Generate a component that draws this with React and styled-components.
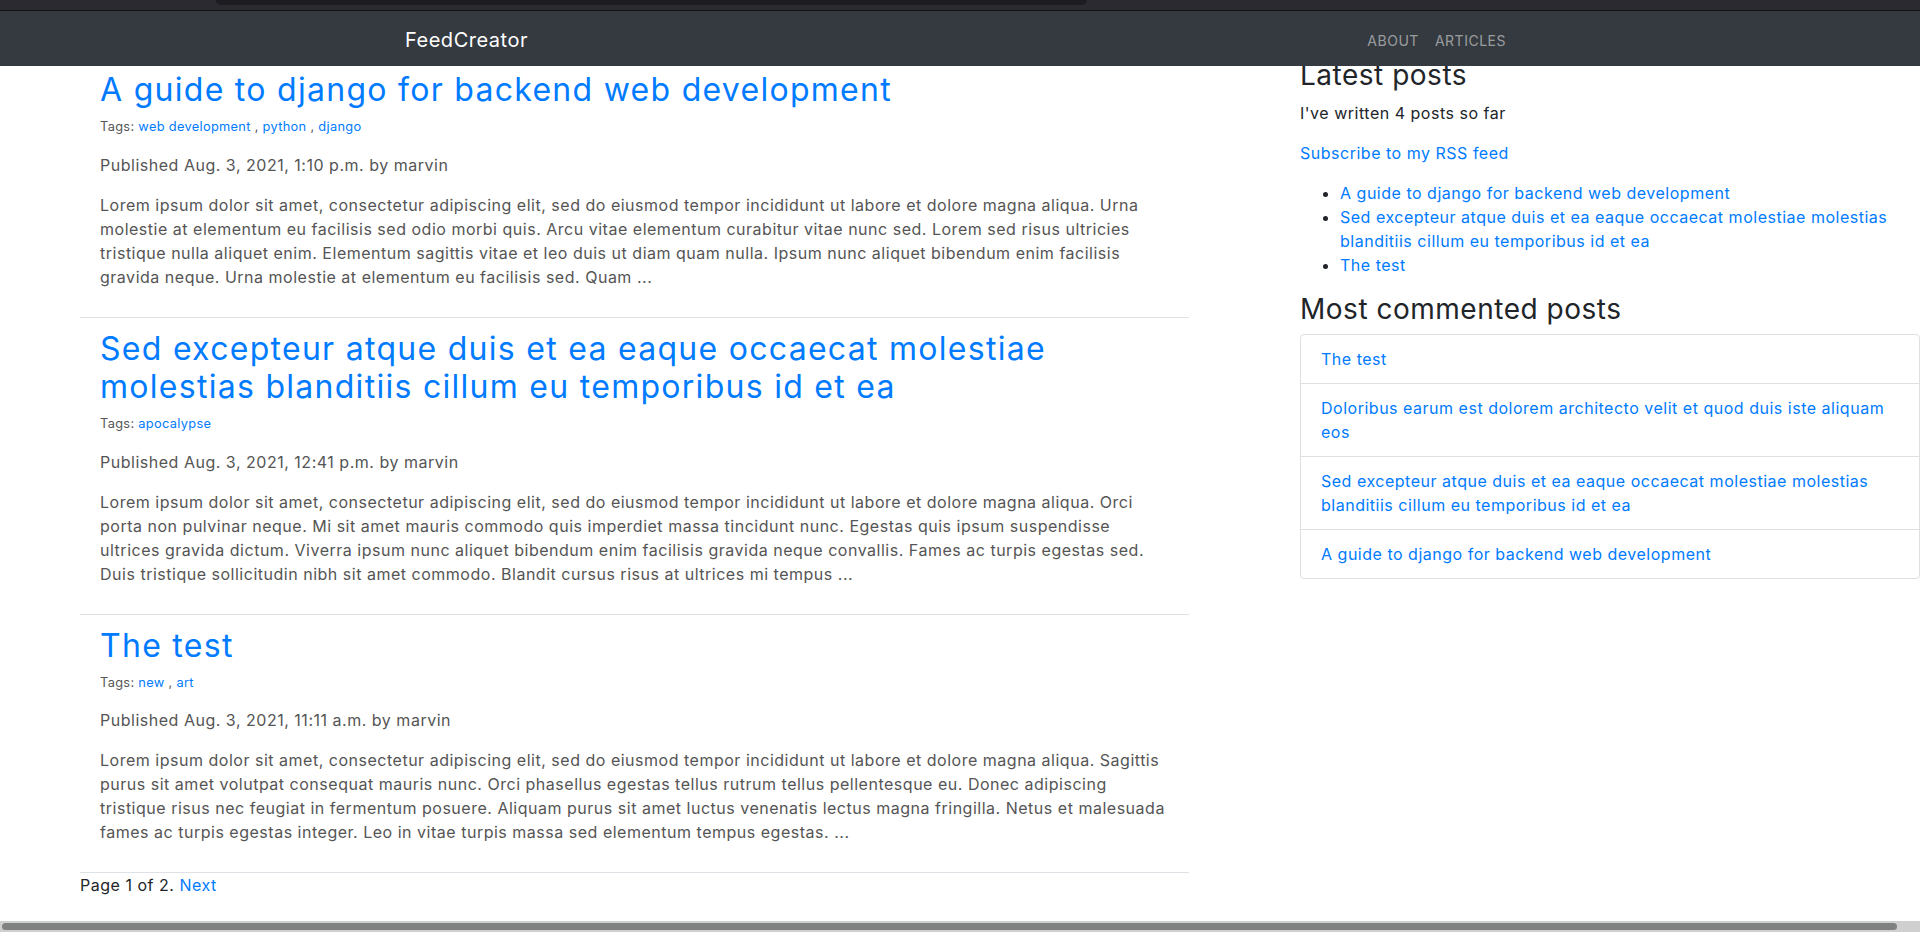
import styled, { createGlobalStyle } from "styled-components";

const GlobalStyle = createGlobalStyle`
  html, body {
    margin: 0;
    padding: 0;
    overflow: hidden;
    background: #fff;
  }
  body {
    font-family: Inter, "Open Sans", sans-serif;
    font-size: 16px;
    line-height: 1.5;
    letter-spacing: 0.032em;
    color: #212529;
  }
  * {
    box-sizing: border-box;
  }
`;

const posts = [
  {
    title: "A guide to django for backend web development",
    tags: ["web development", "python", "django"],
    published: "Aug. 3, 2021, 1:10 p.m.",
    body:
      "Lorem ipsum dolor sit amet, consectetur adipiscing elit, sed do eiusmod tempor incididunt ut labore et dolore magna aliqua. Urna molestie at elementum eu facilisis sed odio morbi quis. Arcu vitae elementum curabitur vitae nunc sed. Lorem sed risus ultricies tristique nulla aliquet enim. Elementum sagittis vitae et leo duis ut diam quam nulla. Ipsum nunc aliquet bibendum enim facilisis gravida neque. Urna molestie at elementum eu facilisis sed. Quam ...",
  },
  {
    title:
      "Sed excepteur atque duis et ea eaque occaecat molestiae molestias blanditiis cillum eu temporibus id et ea",
    tags: ["apocalypse"],
    published: "Aug. 3, 2021, 12:41 p.m.",
    body:
      "Lorem ipsum dolor sit amet, consectetur adipiscing elit, sed do eiusmod tempor incididunt ut labore et dolore magna aliqua. Orci porta non pulvinar neque. Mi sit amet mauris commodo quis imperdiet massa tincidunt nunc. Egestas quis ipsum suspendisse ultrices gravida dictum. Viverra ipsum nunc aliquet bibendum enim facilisis gravida neque convallis. Fames ac turpis egestas sed. Duis tristique sollicitudin nibh sit amet commodo. Blandit cursus risus at ultrices mi tempus ...",
  },
  {
    title: "The test",
    tags: ["new", "art"],
    published: "Aug. 3, 2021, 11:11 a.m.",
    body:
      "Lorem ipsum dolor sit amet, consectetur adipiscing elit, sed do eiusmod tempor incididunt ut labore et dolore magna aliqua. Sagittis purus sit amet volutpat consequat mauris nunc. Orci phasellus egestas tellus rutrum tellus pellentesque eu. Donec adipiscing tristique risus nec feugiat in fermentum posuere. Aliquam purus sit amet luctus venenatis lectus magna fringilla. Netus et malesuada fames ac turpis egestas integer. Leo in vitae turpis massa sed elementum tempus egestas. ...",
  },
];

const latest = [
  "A guide to django for backend web development",
  "Sed excepteur atque duis et ea eaque occaecat molestiae molestias blanditiis cillum eu temporibus id et ea",
  "The test",
];

const mostCommented = [
  "The test",
  "Doloribus earum est dolorem architecto velit et quod duis iste aliquam eos",
  "Sed excepteur atque duis et ea eaque occaecat molestiae molestias blanditiis cillum eu temporibus id et ea",
  "A guide to django for backend web development",
];

// fixed header: browser strip + dark navbar
const Header = styled.header`
  position: fixed;
  top: 0;
  left: 0;
  right: 0;
  z-index: 10;
`;

const TopStrip = styled.div`
  height: 11px;
  background: #2b2a31;
  border-bottom: 1px solid #121215;
`;

const TabBar = styled.div`
  margin-left: 216px;
  width: 871px;
  height: 5px;
  background: #1d1c21;
  border-radius: 0 0 5px 5px;
`;

const Navbar = styled.nav`
  height: 55px;
  background: #343a40;
  display: flex;
  align-items: center;
  justify-content: space-between;
  padding: 3px 406px 0 405px;
`;

const Brand = styled.a`
  color: #fff;
  font-size: 20px;
  text-decoration: none;
`;

const NavLinks = styled.div`
  display: flex;
`;

const NavLink = styled.a`
  color: rgba(255, 255, 255, 0.5);
  text-transform: uppercase;
  font-size: 14px;
  padding: 0 8px;
  text-decoration: none;
`;

const Page = styled.div`
  display: grid;
  grid-template-columns: 1109px 620px;
  column-gap: 111px;
  padding: 59px 0 0 80px;
  align-items: start;
`;

const Main = styled.main``;

const Article = styled.article`
  padding: 12px 20px 12px;
  border-bottom: 1px solid #dee2e6;
`;

const PostTitle = styled.h2`
  margin: 0 0 8px;
  font-size: 32px;
  font-weight: 400;
  line-height: 1.2;
  letter-spacing: 0.04em;

  a {
    color: #007bff;
    text-decoration: none;
  }
`;

const Tags = styled.div`
  font-size: 12.8px;
  letter-spacing: 0.025em;
  color: #555;
  margin-bottom: 16px;

  a {
    color: #007bff;
    text-decoration: none;
  }
`;

const Meta = styled.p`
  margin: 0 0 16px;
  color: #555;
`;

const Body = styled.p`
  margin: 0 0 16px;
  color: #555;
`;

const Pager = styled.div`
  color: #212529;

  a {
    color: #007bff;
    text-decoration: none;
  }
`;

const Sidebar = styled.aside``;

const SideHeading = styled.h3`
  margin: 0 0 8px;
  font-size: 28px;
  font-weight: 400;
  line-height: 1.2;
  color: #212529;
`;

const SideText = styled.p`
  margin: 0 0 16px;
`;

const Link = styled.a`
  color: #007bff;
  text-decoration: none;
`;

const BulletList = styled.ul`
  margin: 0 0 16px;
  padding-left: 40px;
`;

const ListGroup = styled.ul`
  margin: 0;
  padding: 0;
  list-style: none;
  border: 1px solid rgba(0, 0, 0, 0.125);
  border-radius: 4px;
`;

const ListItem = styled.li`
  padding: 12px 20px;
  & + & {
    border-top: 1px solid rgba(0, 0, 0, 0.125);
  }
`;

const ScrollTrack = styled.div`
  position: fixed;
  left: 0;
  right: 0;
  bottom: 0;
  height: 11px;
  background: #cfcfcf;
  padding: 2px 0 2px 2px;
`;

const ScrollThumb = styled.div`
  width: 1895px;
  height: 7px;
  background: #7f8281;
  border-radius: 4px;
`;

function Post({ post }) {
  return (
    <Article>
      <PostTitle>
        <a href="#">{post.title}</a>
      </PostTitle>
      <Tags>
        Tags:{" "}
        {post.tags.map((t, i) => (
          <span key={t}>
            {i > 0 && " , "}
            <a href="#">{t}</a>
          </span>
        ))}
      </Tags>
      <Meta>Published {post.published} by marvin</Meta>
      <Body>{post.body}</Body>
    </Article>
  );
}

export default function App() {
  return (
    <>
      <GlobalStyle />
      <Header>
        <TopStrip>
          <TabBar />
        </TopStrip>
        <Navbar>
          <Brand href="#">FeedCreator</Brand>
          <NavLinks>
            <NavLink href="#">About</NavLink>
            <NavLink href="#">Articles</NavLink>
          </NavLinks>
        </Navbar>
      </Header>

      <Page>
        <Main>
          {posts.map((p) => (
            <Post key={p.title} post={p} />
          ))}
          <Pager>
            Page 1 of 2. <a href="#">Next</a>
          </Pager>
        </Main>

        <Sidebar>
          <SideHeading>Latest posts</SideHeading>
          <SideText>I've written 4 posts so far</SideText>
          <SideText>
            <Link href="#">Subscribe to my RSS feed</Link>
          </SideText>
          <BulletList>
            {latest.map((t) => (
              <li key={t}>
                <Link href="#">{t}</Link>
              </li>
            ))}
          </BulletList>
          <SideHeading>Most commented posts</SideHeading>
          <ListGroup>
            {mostCommented.map((t) => (
              <ListItem key={t}>
                <Link href="#">{t}</Link>
              </ListItem>
            ))}
          </ListGroup>
        </Sidebar>
      </Page>

      <ScrollTrack>
        <ScrollThumb />
      </ScrollTrack>
    </>
  );
}
